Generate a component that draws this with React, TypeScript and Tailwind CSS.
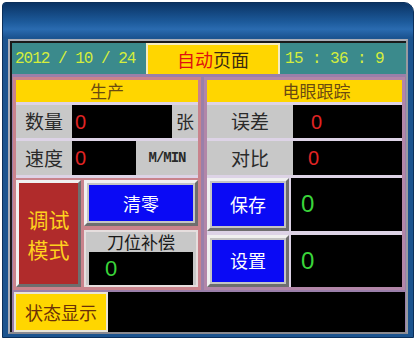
import React from 'react';

const cjk = "font-['Noto_Sans_CJK_SC','Noto_Sans',sans-serif]";
const mono = "font-['Liberation_Mono','DejaVu_Sans_Mono',monospace]";
const narrow = "font-['Liberation_Sans_Narrow','Liberation_Sans',sans-serif]";

// raised grey frame around the HMI buttons
const bevel =
  'border-[3px] border-t-[#f0f0f0] border-l-[#f0f0f0] border-b-[#6e6e6e] border-r-[#6e6e6e] bg-[#c4c4c4]';

function Cell({ className, children }: { className?: string; children?: React.ReactNode }) {
  return <div className={`flex items-center ${className ?? ''}`}>{children}</div>;
}

export default function App() {
  return (
    <div className={`w-[417px] h-[341px] bg-white pt-[2px] pl-[2px] ${cjk}`}>
      <div className="w-[412px] h-[336px] flex flex-col rounded-tr-[10px] rounded-tl-[4px] bg-[#1c548f] border border-[#0b2f5a] overflow-hidden">
        {/* Title bar */}
        <div className="h-[35px] shrink-0 bg-[linear-gradient(to_bottom,#0a3364,#1d5b9c_55%,#2a6bb0_75%,#1a5290)]" />

        {/* Frame */}
        <div className="flex-1 px-[5px] pb-[3px] pt-[1px]">
          <div className="h-full border-t-2 border-l-2 border-[#a9adb8] border-r-2 border-r-[#9a9aa0] border-b-2 border-b-[#8a8a90]">
            <div className="h-full flex flex-col border-2 border-[#1a1a1a] border-r-0 border-b-0 bg-[#9a7fa9]">
              {/* Header row */}
              <div className="h-[31px] shrink-0 flex bg-[#3b8a8c]">
                <Cell className={`w-[134px] pl-[3px] text-[16px] text-[#d4ee3c] ${mono} tracking-[-1px] whitespace-pre`}>
                  2012 / 10 / 24
                </Cell>
                <Cell className="w-[134px] justify-center bg-[#ffd600] border-[2px] border-[#f4ecc0] border-b-0 text-[18px]">
                  <span className="text-[#e01010]">自动</span>
                  <span className="text-[#3a2a10]">页面</span>
                </Cell>
                <Cell className={`flex-1 pl-[5px] text-[16px] text-[#d4ee3c] ${mono} tracking-[-0.6px] whitespace-pre`}>
                  15 : 36 : 9
                </Cell>
              </div>

              {/* Body */}
              <div className="flex-1 flex flex-col px-[1px] pt-[3px] gap-[2px]">
                <div className="flex gap-[3px] h-[213px]">
                  {/* Left panel: 生产 */}
                  <div className="w-[188px] border-[3px] border-[#c9838c] bg-[#ddd3e6] flex flex-col gap-[3px]">
                    <Cell className="h-[22px] justify-center bg-[#ffd600] text-[17px] text-[#6a4a10]">生产</Cell>
                    <div className="h-[33px] flex bg-[#c8c8c8]">
                      <Cell className="w-[56px] justify-center text-[19px] text-[#2a2a2a]">数量</Cell>
                      <Cell className={`w-[100px] bg-black pl-[3px] text-[20px] text-[#e02424] ${narrow}`}>0</Cell>
                      <Cell className="flex-1 justify-center text-[18px] text-[#2a2a2a]">张</Cell>
                    </div>
                    <div className="h-[34px] flex bg-[#c8c8c8]">
                      <Cell className="w-[56px] justify-center text-[19px] text-[#2a2a2a]">速度</Cell>
                      <Cell className={`w-[64px] bg-black pl-[3px] text-[20px] text-[#e02424] ${narrow}`}>0</Cell>
                      <Cell className={`flex-1 justify-center text-[14px] font-bold text-[#2a2a2a] ${mono} tracking-[-1px]`}>
                        M/MIN
                      </Cell>
                    </div>
                    <div className="flex-1 flex bg-[#c9838c] gap-[3px] pt-[2px]">
                      <div className={`w-[65px] ${bevel}`}>
                        <div className="h-full bg-[#b02b2b] flex flex-col items-center justify-center text-[21px] leading-[30px] text-[#ffd21e]">
                          <span>调试</span>
                          <span>模式</span>
                        </div>
                      </div>
                      <div className="flex-1 flex flex-col gap-[4px]">
                        <div className={`h-[46px] ${bevel} p-[2px]`}>
                          <Cell className="h-full justify-center bg-[#0a0af5] text-[18px] text-white">清零</Cell>
                        </div>
                        <div className="flex-1 bg-[#c8c8c8] border-[2px] border-[#e6dede] flex flex-col">
                          <Cell className="h-[20px] justify-center text-[17px] text-[#1a1a1a]">刀位补偿</Cell>
                          <Cell className={`flex-1 mx-[3px] bg-black pl-[16px] text-[22px] text-[#3ad43a] ${narrow}`}>0</Cell>
                        </div>
                      </div>
                    </div>
                  </div>

                  {/* Right panel: 电眼跟踪 */}
                  <div className="flex-1 border-[3px] border-[#b286a8] bg-[#ddd3e6] flex flex-col gap-[3px]">
                    <Cell className="h-[22px] justify-center bg-[#ffd600] text-[17px] text-[#6a4a10] pl-[24px]">电眼跟踪</Cell>
                    <div className="h-[33px] flex bg-[#c8c8c8]">
                      <Cell className="w-[86px] justify-center text-[19px] text-[#2a2a2a]">误差</Cell>
                      <Cell className={`flex-1 bg-black pl-[18px] text-[20px] text-[#e02424] ${narrow}`}>0</Cell>
                    </div>
                    <div className="h-[34px] flex bg-[#c8c8c8]">
                      <Cell className="w-[86px] justify-center text-[19px] text-[#2a2a2a]">对比</Cell>
                      <Cell className={`flex-1 bg-black pl-[15px] text-[20px] text-[#e02424] ${narrow}`}>0</Cell>
                    </div>
                    <div className="flex-1 flex flex-col gap-[4px] bg-[#ddd3e6]">
                      {['保存', '设置'].map((t) => (
                        <div key={t} className="flex-1 flex gap-[2px]">
                          <div className={`w-[82px] ${bevel} p-[2px]`}>
                            <Cell className="h-full justify-center bg-[#0a0af5] text-[18px] text-white">{t}</Cell>
                          </div>
                          <Cell className="flex-1 bg-black pl-[10px] text-[24px] text-[#3ad43a] font-['Liberation_Sans','Arial',sans-serif]">0</Cell>
                        </div>
                      ))}
                    </div>
                  </div>
                </div>

                {/* Status row */}
                <div className="flex-1 flex pl-[1px]">
                  <Cell className="w-[94px] justify-center bg-[#ffd600] border-[2px] border-[#e8e4d8] text-[18px] text-[#6a3008]">
                    状态显示
                  </Cell>
                  <div className="flex-1 bg-black" />
                </div>
              </div>
            </div>
          </div>
        </div>
      </div>
    </div>
  );
}
